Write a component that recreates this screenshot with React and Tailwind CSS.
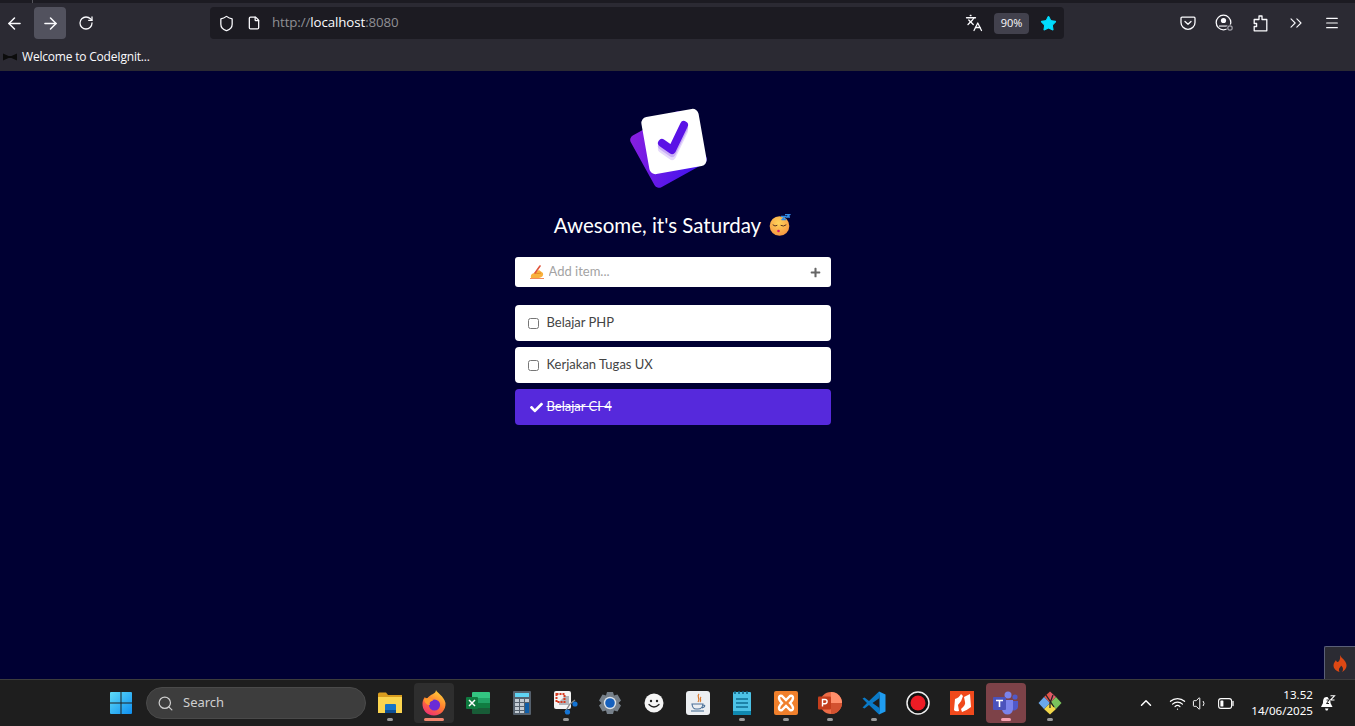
import React from 'react';
import {
  ArrowLeft, ArrowRight, RotateCw, Shield, File, Languages, Star, ChevronsRight,
  Menu, Search, ChevronUp, Wifi, Volume1,
} from 'lucide-react';
import { FaCheck, FaPlus } from 'react-icons/fa';

const BrowserBar = () => (
  <header className="bg-[#2b2a33] text-[#fbfbfe] font-['Open_Sans',sans-serif]">
    <div className="h-[3px] bg-[#1c1b22]">
      <div className="ml-[32px] w-px h-full bg-[#55555c]" />
    </div>
    <div className="h-[40px] flex items-center">
      <div className="w-[32px] ml-[-2px] flex justify-center"><ArrowLeft size={19} strokeWidth={1.9} /></div>
      <div className="w-[32px] h-[32px] ml-[4px] bg-[#52525e] rounded flex items-center justify-center"><ArrowRight size={19} strokeWidth={1.9} /></div>
      <div className="w-[32px] ml-[4px] flex justify-center"><RotateCw size={16} strokeWidth={1.9} /></div>
      <div className="ml-[108px] w-[854px] h-[32px] bg-[#1c1b22] rounded flex items-center">
        <Shield size={17} strokeWidth={1.8} className="ml-[8px]" />
        <File size={14} strokeWidth={2.2} className="ml-[12px]" />
        <span className="ml-[11px] text-[13.3px] tracking-[-0.1px] text-[#8f8f94]">http://<span className="text-[#fbfbfe]">localhost</span>:8080</span>
        <Languages size={18} strokeWidth={1.7} className="ml-auto" />
        <span className="ml-[11px] w-[35px] h-[21px] bg-[#42414d] rounded text-[11px] flex items-center justify-center">90%</span>
        <Star size={17} fill="#00ddff" stroke="#00ddff" strokeWidth={1.5} className="ml-[11px] mr-[7px]" />
      </div>
      <PocketIcon />
      <ProfileIcon />
      <ExtensionIcon />
      <ChevronsRight size={20} strokeWidth={1.3} className="ml-[18px]" />
      <Menu size={16} strokeWidth={1.8} className="ml-[18px]" />
    </div>
    <div className="h-[28px] flex items-center">
      <svg width="14" height="8" viewBox="0 0 14 8" className="ml-[3px]">
        <path d="M0 0.5 L5.5 3 H8.5 L14 0.5 V7.5 L8.5 5 H5.5 L0 7.5Z" fill="#0c0c0c" />
      </svg>
      <span className="ml-[5px] text-[12px] tracking-[-0.2px]">Welcome to CodeIgnit...</span>
    </div>
  </header>
);

const PocketIcon = () => (
  <svg width="16" height="16" viewBox="0 0 16 16" fill="none" stroke="currentColor" strokeWidth="1.3" className="ml-[116px]">
    <path d="M2 2.2 H14 A1 1 0 0 1 15 3.2 V7.5 A7 6.8 0 0 1 1 7.5 V3.2 A1 1 0 0 1 2 2.2Z" />
    <path d="M5 6.5 L8 9.3 L11 6.5" strokeLinecap="round" strokeLinejoin="round" />
  </svg>
);

const ProfileIcon = () => (
  <svg width="19" height="18" viewBox="0 0 19 18" fill="none" className="ml-[19px]">
    <circle cx="8.5" cy="8.5" r="7.3" stroke="currentColor" strokeWidth="1.3" />
    <circle cx="8.5" cy="6.5" r="2.6" fill="currentColor" />
    <path d="M4 11.5 H13 V12.6 H4Z" fill="currentColor" />
    <circle cx="15" cy="14" r="3.6" fill="#2b2a33" />
    <circle cx="15" cy="14" r="2.2" stroke="#a0a0a8" strokeWidth="1.2" />
  </svg>
);

const ExtensionIcon = () => (
  <svg width="15" height="17" viewBox="0 0 15 17" fill="none" stroke="currentColor" strokeWidth="1.3" strokeLinejoin="round" className="ml-[19px]">
    <path d="M6 1 H9 V4.5 H13.8 V15.8 H1.2 V11.5 H3.6 V8.5 H1.2 V4.5 H6Z" />
  </svg>
);

const Logo = () => (
  <svg width="80" height="84" viewBox="0 0 80 84" className="block">
    <defs>
      <linearGradient id="back" x1="0" y1="0" x2="1" y2="1">
        <stop offset="0" stopColor="#8a1fe0" />
        <stop offset="1" stopColor="#3a12f0" />
      </linearGradient>
    </defs>
    <rect x="10" y="14" width="59" height="59" rx="5" fill="url(#back)" transform="rotate(-29 39.5 43.5)" />
    <rect x="16" y="6.5" width="58" height="58" rx="6" fill="#fff" transform="rotate(-10 45 35.5)" />
    <path d="M33 37 L43 44 L55 19" fill="none" stroke="#e6dafb" strokeWidth="8" strokeLinecap="round" strokeLinejoin="round" transform="translate(0 6)" />
    <path d="M33 37 L43 44 L55 19" fill="none" stroke="#c9aef5" strokeWidth="8" strokeLinecap="round" strokeLinejoin="round" transform="translate(0 3)" />
    <path d="M33 37 L43 44 L55 19" fill="none" stroke="#5a12e6" strokeWidth="8" strokeLinecap="round" strokeLinejoin="round" />
  </svg>
);

const SleepingFace = () => (
  <svg width="22" height="22" viewBox="0 0 22 22" className="ml-[8px]">
    <defs>
      <radialGradient id="face" cx="0.45" cy="0.35" r="0.8">
        <stop offset="0" stopColor="#ffd45a" />
        <stop offset="1" stopColor="#f58a3c" />
      </radialGradient>
    </defs>
    <circle cx="10.5" cy="12" r="9.8" fill="url(#face)" />
    <path d="M4 11 Q6 13 8 11.5 M12 11.5 Q14.5 13 17 11" stroke="#5b3420" strokeWidth="1" fill="none" strokeLinecap="round" />
    <circle cx="9.5" cy="17" r="1.3" fill="#d6186c" />
    <path d="M12 2.5 H16.5 L13 5.5 H17 M16 0.5 H21 L17.5 3 H21" stroke="#2f8be6" strokeWidth="1.4" fill="none" strokeLinejoin="round" />
  </svg>
);

const WritingHand = () => (
  <svg width="15" height="14" viewBox="0 0 15 14">
    <path d="M1 13 Q0 9 4 8 L9 5 L13 8 Q14 12 9 13Z" fill="#f9b13c" />
    <path d="M5 8 Q8 9 11 8" stroke="#e58a20" fill="none" />
    <path d="M5 8 L10 1" stroke="#e0533a" strokeWidth="1.6" strokeLinecap="round" />
    <path d="M0 13.5 H14" stroke="#f08a5a" strokeWidth="1" />
  </svg>
);

const TodoItem = ({ label }) => (
  <li className="h-[36px] bg-white rounded flex items-center pl-[13px] text-[13px] text-[#444]">
    <input type="checkbox" readOnly className="w-[11px] h-[11px] m-0" />
    <span className="ml-[8px]">{label}</span>
  </li>
);

const TodoApp = () => (
  <main className="relative flex-1 bg-[#000033] flex flex-col items-center pt-[35px] pr-[10px] font-['Lato',sans-serif]">
    <div className="ml-[-8px]"><Logo /></div>
    <h1 className="mt-[19px] h-[32px] flex items-center text-[20.5px] text-white">
      Awesome, it's Saturday <SleepingFace />
    </h1>
    <form className="mt-[16px] w-[316px] h-[30px] bg-white rounded-[3px] flex items-center pl-[15px] pr-[10px]">
      <WritingHand />
      <input placeholder="Add item..." className="ml-[4px] flex-1 min-w-0 text-[13px] outline-none placeholder:text-[#a3a3a3]" />
      <FaPlus size={11} className="text-[#666]" />
    </form>
    <ul className="mt-[18px] w-[316px] flex flex-col gap-[6px]">
      <TodoItem label="Belajar PHP" />
      <TodoItem label="Kerjakan Tugas UX" />
      <li className="h-[36px] bg-[#5629dc] rounded flex items-center pl-[15px] text-[13px] text-white">
        <FaCheck size={13} />
        <span className="ml-[4px] line-through">Belajar CI 4</span>
      </li>
    </ul>
    <div className="absolute right-0 bottom-0 w-[31px] h-[33px] bg-[#2b2b33] border-l border-t border-[#5a5f78] rounded-tl-[2px] flex items-center justify-center">
      <Flame />
    </div>
  </main>
);

const Flame = () => (
  <svg width="14" height="17" viewBox="0 0 14 17">
    <path d="M7 0 C8 3 13 5 13.5 10 C13.8 13.5 11 16 9 17 C10.5 15 10.5 12.5 8 10.5 C7.8 12 6.5 12.5 6 14 C5.7 15 6 16 6.5 17 C3 16 0.5 13.5 0.5 10.5 C0.5 8 2 6.5 3 5 C3.2 6.5 4 7 5 7 C7 5.5 7.5 3 7 0Z" fill="#dd4814" />
  </svg>
);

const Slot = ({ children, dot = true, active, className = '' }) => (
  <div className={`relative w-[40px] h-[40px] mx-[2px] rounded flex items-center justify-center ${className}`}>
    {children}
    {dot && !active && <span className="absolute bottom-[2px] left-[17px] w-[6px] h-[3px] rounded-full bg-[#9a9a9a]" />}
    {active && <span className={`absolute bottom-[2px] rounded-full h-[3px] ${active}`} />}
  </div>
);

const WindowsLogo = () => (
  <svg width="24" height="24" viewBox="0 0 24 24">
    <defs>
      <linearGradient id="win" x1="0" y1="0" x2="1" y2="1">
        <stop offset="0" stopColor="#5fdcf8" />
        <stop offset="1" stopColor="#0f8ff0" />
      </linearGradient>
    </defs>
    <path d="M1 2 a1 1 0 0 1 1-1 H11.5 V11.5 H1Z M12.5 1 H22 a1 1 0 0 1 1 1 V11.5 H12.5Z M1 12.5 H11.5 V23 H2 a1 1 0 0 1-1-1Z M12.5 12.5 H23 V22 a1 1 0 0 1-1 1 H12.5Z" fill="url(#win)" />
  </svg>
);

const FilesIcon = () => (
  <svg width="24" height="22" viewBox="0 0 24 22">
    <path d="M0 2 a1.5 1.5 0 0 1 1.5-1.5 H8 L10 3 H24 V6 H0Z" fill="#d99d1f" />
    <path d="M0 5 H24 V21 H0Z" fill="#fbd54f" />
    <path d="M7 13 a1 1 0 0 1 1-1 H17 a1 1 0 0 1 1 1 V21 H7Z" fill="#1674c8" />
    <path d="M7 18 H18 V21 H7Z" fill="#0c4f96" />
  </svg>
);

const FirefoxIcon = () => (
  <svg width="24" height="26" viewBox="0 0 24 26">
    <defs>
      <linearGradient id="ffx" x1="0.7" y1="0" x2="0.2" y2="1">
        <stop offset="0" stopColor="#ffd43b" />
        <stop offset="0.5" stopColor="#ff7a2e" />
        <stop offset="1" stopColor="#f0287a" />
      </linearGradient>
    </defs>
    <path d="M14 0 C15 3 22 6 23.5 13 C24 20 18.5 25.5 12 25.5 C5 25.5 0 20 0.5 13 C0.8 10 2 8 3 7 C3.5 8 4 8.5 5 9 C6 6.5 9 5 11 4 C12.5 3 14 2 14 0Z" fill="url(#ffx)" />
    <circle cx="12.5" cy="15" r="5.6" fill="#6a2bd6" />
    <path d="M2 9 C5 7 10 8 11 11 C8 11 7 13 8 15 C5 15 2.5 13 2 9Z" fill="#ff9a2e" />
  </svg>
);

const ExcelIcon = () => (
  <svg width="24" height="22" viewBox="0 0 24 22">
    <path d="M6 1 a1 1 0 0 1 1-1 H23 a1 1 0 0 1 1 1 V6 H6Z" fill="#33c481" />
    <path d="M6 6 H15 V11 H6Z" fill="#21a366" />
    <path d="M15 6 H24 V11 H15Z" fill="#21a366" />
    <path d="M6 11 H24 V16 H6Z" fill="#107c41" />
    <path d="M6 16 H24 V21 a1 1 0 0 1-1 1 H7 a1 1 0 0 1-1-1Z" fill="#185c37" />
    <rect x="0" y="5" width="12" height="12" rx="1" fill="#0f7a3f" />
    <path d="M3 8 L9 14 M9 8 L3 14" stroke="#fff" strokeWidth="1.5" />
  </svg>
);

const CalcIcon = () => (
  <svg width="18" height="24" viewBox="0 0 18 24">
    <rect width="18" height="24" rx="1" fill="#56616d" />
    <rect x="2" y="2" width="14" height="4" fill="#5fd3f3" />
    {[8, 12, 16].map((y) => [2, 7].map((x) => <rect key={`${x}-${y}`} x={x} y={y} width="4" height="3" fill="#c3ccd4" />))}
    <rect x="12" y="12" width="4" height="10" fill="#0f5ea8" />
    <rect x="12" y="8" width="4" height="3" fill="#c3ccd4" />
    <rect x="2" y="20" width="4" height="2" fill="#c3ccd4" />
    <rect x="7" y="20" width="4" height="2" fill="#c3ccd4" />
  </svg>
);

const SnipIcon = () => (
  <svg width="24" height="24" viewBox="0 0 24 24">
    <rect width="17" height="18" rx="2" fill="#f4f4f4" />
    <path d="M11 5 H15 V14 H5 V11" fill="#b0b4ba" />
    <rect x="2.5" y="3" width="8" height="8" fill="none" stroke="#d8391f" strokeWidth="2" strokeDasharray="2 1" />
    <path d="M11 21 L16 13 L21 9" stroke="#888" strokeWidth="1.4" fill="none" />
    <circle cx="13.5" cy="21" r="2.6" fill="#1474d4" />
    <circle cx="21" cy="13" r="2.6" fill="#1474d4" />
  </svg>
);

const SettingsIcon = () => (
  <svg width="24" height="24" viewBox="0 0 24 24">
    <path d="M9 1 H15 L16 4.5 L19.5 3.5 L23 9.5 L20.5 12 L23 14.5 L19.5 20.5 L16 19.5 L15 23 H9 L8 19.5 L4.5 20.5 L1 14.5 L3.5 12 L1 9.5 L4.5 3.5 L8 4.5Z" fill="#76808a" strokeLinejoin="round" />
    <circle cx="12" cy="12" r="6.2" fill="#dde3ea" />
    <circle cx="12" cy="12" r="4.8" fill="#1560bd" />
  </svg>
);

const SmileIcon = () => (
  <svg width="20" height="20" viewBox="0 0 20 20">
    <circle cx="10" cy="10" r="9.5" fill="#f5f5f5" />
    <circle cx="7" cy="8" r="1.2" fill="#222" />
    <circle cx="13" cy="8" r="1.2" fill="#222" />
    <path d="M5 11.5 Q10 16.5 15 11.5" stroke="#222" strokeWidth="1.3" fill="none" strokeLinecap="round" />
  </svg>
);

const JavaIcon = () => (
  <svg width="24" height="24" viewBox="0 0 24 24">
    <rect width="24" height="24" rx="3" fill="#eceff2" />
    <path d="M13 3 C10 6 15 7 12 11 M15 6 C13 8 16 9 14 11" stroke="#d9772b" strokeWidth="1.2" fill="none" />
    <path d="M6 13 H17 Q16.5 18 12 18 H10 Q6.5 18 6 13Z M17 14 Q20 14 18 16 L16 17" fill="none" stroke="#4a6f96" strokeWidth="1.1" />
    <path d="M5 20 H18" stroke="#4a6f96" strokeWidth="1.1" />
  </svg>
);

const NotepadIcon = () => (
  <svg width="18" height="24" viewBox="0 0 18 24">
    <rect y="1" width="18" height="23" rx="1" fill="#4cc2e6" />
    <path d="M2 0 V3 M6 0 V3 M10 0 V3 M14 0 V3" stroke="#0e5f80" strokeWidth="1.5" />
    <path d="M3 8 H15 M3 12 H15 M3 16 H15" stroke="#0e6f94" strokeWidth="1.6" />
    <rect y="20" width="18" height="4" fill="#1089b0" />
  </svg>
);

const XamppIcon = () => (
  <svg width="24" height="24" viewBox="0 0 24 24">
    <rect width="24" height="24" rx="2" fill="#f0802c" />
    <path d="M5 7 Q5 4 8 5 L12 9 L16 5 Q19 4 19 7 Q19 9 16 12 Q19 15 19 17 Q19 20 16 19 L12 15 L8 19 Q5 20 5 17 Q5 15 8 12 Q5 9 5 7Z" fill="none" stroke="#fff" strokeWidth="2.4" />
  </svg>
);

const PowerpointIcon = () => (
  <svg width="24" height="24" viewBox="0 0 24 24">
    <circle cx="13" cy="12" r="11" fill="#ed6c47" />
    <path d="M13 1 A11 11 0 0 1 24 12 H13Z" fill="#ff8f6b" />
    <path d="M13 12 H24 A11 11 0 0 1 13 23Z" fill="#d35230" />
    <rect y="5.5" width="13" height="13" rx="1" fill="#c43e1c" />
    <path d="M4.5 15.5 V8.5 H7 a2 2 0 0 1 0 4.2 H4.5" stroke="#fff" strokeWidth="1.4" fill="none" />
  </svg>
);

const VscodeIcon = () => (
  <svg width="24" height="24" viewBox="0 0 24 24">
    <path d="M17 0.5 L23.5 3.5 V20.5 L17 23.5 L17.5 17 V7Z" fill="#1f9cf0" />
    <path d="M17 0.5 L7 10 L2.5 6.5 L0.5 7.5 L5 12 L0.5 16.5 L2.5 17.5 L7 14 L17 23.5 L17.5 17 L10.5 12 L17.5 7Z" fill="#0a7ac7" />
  </svg>
);

const RecordIcon = () => (
  <svg width="24" height="24" viewBox="0 0 24 24">
    <circle cx="12" cy="12" r="11" fill="#111" stroke="#eee" strokeWidth="1.5" />
    <circle cx="12" cy="12" r="7.5" fill="#ee1c25" />
  </svg>
);

const AcrobatIcon = () => (
  <svg width="24" height="24" viewBox="0 0 24 24">
    <rect width="24" height="24" fill="#f0491c" />
    <path d="M5 8 Q9 7 11 3 L13 5 Q12 10 8 14 L9 20 Q5 21 4 19Z" fill="#fff" />
    <path d="M14 6 Q16 5 20 3 L21 16 Q16 20 12 21 L11 18 Q16 14 15 11Z" fill="#fff" />
  </svg>
);

const TeamsIcon = () => (
  <svg width="26" height="24" viewBox="0 0 26 24">
    <circle cx="15" cy="4" r="3.5" fill="#7b83eb" />
    <circle cx="22" cy="6" r="2.6" fill="#5059c9" />
    <path d="M18 10 H25 V16 a4 4 0 0 1-7 2Z" fill="#5059c9" />
    <path d="M9 9 H20 V18 a5.5 5.5 0 0 1-11 0Z" fill="#7b83eb" />
    <rect y="6" width="13" height="13" rx="1" fill="#4b53bc" />
    <path d="M3 9.5 H10 M6.5 9.5 V16" stroke="#fff" strokeWidth="1.6" />
  </svg>
);

const GitIcon = () => (
  <svg width="24" height="24" viewBox="0 0 24 24">
    <path d="M12 12 L6 6 L12 0.5Z" fill="#e0534a" />
    <path d="M12 0.5 L18 6 L12 12Z" fill="#e05a68" />
    <path d="M12 12 L18 6 L23.5 12 L18 18Z" fill="#7ac35c" />
    <path d="M12 12 L18 18 L12 23.5 L6 18Z" fill="#f2d84a" />
    <path d="M12 12 L6 18 L0.5 12 L6 6Z" fill="#6aa8ea" />
    <path d="M8 4 L16 16 M15 4 L12 12 L12 17" stroke="#222" strokeWidth="1.3" fill="none" />
  </svg>
);

const BatteryIcon = () => (
  <svg width="16" height="11" viewBox="0 0 16 11" fill="none">
    <rect x="0.6" y="0.6" width="13" height="9.8" rx="2.4" stroke="#fff" strokeWidth="1.1" />
    <rect x="2.4" y="2.4" width="3" height="6.2" rx="0.6" fill="#fff" />
    <path d="M15 3.5 V7.5" stroke="#fff" strokeWidth="1.3" strokeLinecap="round" />
  </svg>
);

const BellIcon = () => (
  <svg width="16" height="17" viewBox="0 0 16 17">
    <path d="M6.5 2 C3.5 2 3 5 3 8 L1 12 H12.5 L10.5 8 V6.5 L7.5 2Z" fill="#fff" />
    <path d="M5 13.5 H8.5 L7.5 15.5 H5.8Z" fill="#fff" />
    <path d="M10.5 0.8 H14.5 L10.5 5 H14.5" stroke="#fff" strokeWidth="1.1" fill="none" />
    <path d="M6.5 5 H9 L6.5 8.5 H9" stroke="#1e1e1e" strokeWidth="1" fill="none" />
  </svg>
);

const Taskbar = () => (
  <footer className="h-[47px] bg-[#1e1e1e] border-t border-[#3c3c3c] flex items-center text-white font-['Noto_Sans',sans-serif]">
    <div className="ml-[99px] w-[44px] flex justify-center"><WindowsLogo /></div>
    <div className="ml-[3px] w-[220px] h-[32px] rounded-full bg-[#3d3d3d] border border-[#4a4a4a] flex items-center text-[#cfcfcf]">
      <Search size={17} strokeWidth={1.7} className="ml-[10px]" />
      <span className="ml-[9px] text-[13px]">Search</span>
    </div>
    <div className="ml-[2px] flex items-center">
      <Slot><FilesIcon /></Slot>
      <Slot active="left-[10px] w-[20px] bg-[#f0856e]" className="bg-[#2e2e2e]"><FirefoxIcon /></Slot>
      <Slot dot={false}><ExcelIcon /></Slot>
      <Slot dot={false}><CalcIcon /></Slot>
      <Slot><SnipIcon /></Slot>
      <Slot dot={false}><SettingsIcon /></Slot>
      <Slot dot={false}><SmileIcon /></Slot>
      <Slot dot={false}><JavaIcon /></Slot>
      <Slot><NotepadIcon /></Slot>
      <Slot><XamppIcon /></Slot>
      <Slot><PowerpointIcon /></Slot>
      <Slot><VscodeIcon /></Slot>
      <Slot dot={false}><RecordIcon /></Slot>
      <Slot dot={false}><AcrobatIcon /></Slot>
      <Slot active="left-[15px] w-[10px] bg-[#f5a0b0]" className="bg-[#7d4248]"><TeamsIcon /></Slot>
      <Slot><GitIcon /></Slot>
    </div>
    <div className="ml-auto flex items-center pr-[19px]">
      <ChevronUp size={18} strokeWidth={2} />
      <Wifi size={17} strokeWidth={1.7} className="ml-[14px]" />
      <Volume1 size={17} strokeWidth={1.4} className="ml-[6px]" />
      <div className="ml-[9px]"><BatteryIcon /></div>
      <div className="ml-[17px] text-right text-[11.6px] leading-[16px]">
        <div>13.52</div>
        <div>14/06/2025</div>
      </div>
      <div className="ml-[7px]"><BellIcon /></div>
    </div>
  </footer>
);

export default function App() {
  return (
    <div className="h-[726px] flex flex-col overflow-hidden">
      <BrowserBar />
      <TodoApp />
      <Taskbar />
    </div>
  );
}
